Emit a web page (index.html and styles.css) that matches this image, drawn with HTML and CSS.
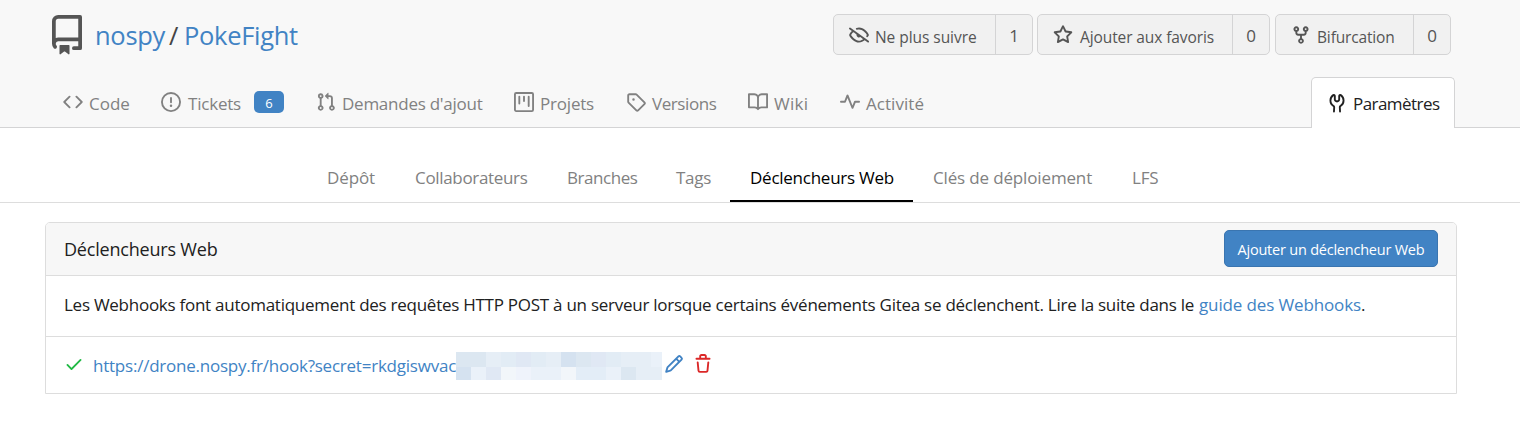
FILE: index.html
```html
<!DOCTYPE html>
<html lang="fr">
<head>
<meta charset="utf-8">
<title>nospy/PokeFight - Déclencheurs Web</title>
<link rel="stylesheet" href="styles.css">
</head>
<body>
<header class="repo-header">
  <div class="repo-top">
    <svg class="repo-icon" viewBox="0 0 16 16"><path d="M2 2.500A2.500 2.500 0 014.500 0h8.750a.75.75 0 01.75.75v12.500a.75.75 0 01-.75.75h-2.500a.75.75 0 110-1.500h1.750v-2h-8a1 1 0 00-.714 1.700.75.75 0 01-1.072 1.050A2.495 2.495 0 012 11.500v-9zm10.500-1V9h-8c-.356 0-.694.074-1 .208V2.500a1 1 0 011-1h8zM5 12.250v3.250a.25.25 0 00.4.2l1.450-1.087a.25.25 0 01.3 0L8.600 15.700a.25.25 0 00.4-.2v-3.250a.25.25 0 00-.25-.25h-3.500a.25.25 0 00-.25.25z"/></svg>
    <div class="repo-title"><a class="owner" href="#">nospy</a><span class="slash">/</span><a class="name" href="#">PokeFight</a></div>
    <div class="actions">
      <div class="action watch">
        <a class="action-main" href="#"><svg class="icon" viewBox="0 0 16 16"><path d="M.143 2.310a.75.75 0 011.047-.167l14.500 10.500a.75.75 0 11-.88 1.214l-2.248-1.628C11.346 13.190 9.792 14 8 14c-1.981 0-3.670-.992-4.933-2.078C1.797 10.832.88 9.577.43 8.900a1.618 1.618 0 010-1.797c.353-.533.995-1.420 1.868-2.305L.31 3.357A.75.75 0 01.143 2.310zm3.386 3.378a14.210 14.210 0 00-1.850 2.244.12.12 0 00-.022.068c0 .021.006.045.022.068.412.621 1.242 1.750 2.366 2.717C5.175 11.758 6.527 12.500 8 12.500c1.195 0 2.310-.488 3.290-1.191L9.063 9.695A2 2 0 016.058 7.520l-2.530-1.832zM8 3.500c-.516 0-1.017.09-1.499.251a.75.75 0 11-.473-1.423A6.230 6.230 0 018 2c1.981 0 3.670.992 4.933 2.078 1.270 1.091 2.187 2.345 2.637 3.023a1.620 1.620 0 010 1.798c-.11.166-.248.365-.41.587a.75.75 0 11-1.210-.887c.148-.201.272-.382.371-.53a.119.119 0 000-.137c-.412-.621-1.242-1.750-2.366-2.717C10.825 4.242 9.473 3.500 8 3.500z"/></svg><span>Ne plus suivre</span></a>
        <a class="count" href="#">1</a>
      </div>
      <div class="action star">
        <a class="action-main" href="#"><svg class="icon" viewBox="0 0 16 16"><path d="M8 .25a.75.75 0 01.673.418l1.882 3.815 4.210.612a.75.75 0 01.416 1.279l-3.046 2.970.719 4.192a.75.75 0 01-1.088.791L8 12.347l-3.766 1.980a.75.75 0 01-1.088-.79l.72-4.194L.818 6.374a.75.75 0 01.416-1.280l4.210-.611L7.327.668A.75.75 0 018 .25zm0 2.445L6.615 5.500a.75.75 0 01-.564.41l-3.097.45 2.240 2.184a.75.75 0 01.216.664l-.528 3.084 2.769-1.456a.75.75 0 01.698 0l2.770 1.456-.53-3.084a.75.75 0 01.216-.664l2.240-2.183-3.096-.45a.75.75 0 01-.564-.41L8 2.694z"/></svg><span>Ajouter aux favoris</span></a>
        <a class="count" href="#">0</a>
      </div>
      <div class="action fork">
        <a class="action-main" href="#"><svg class="icon" viewBox="0 0 16 16"><path d="M5 3.250a.75.75 0 11-1.500 0 .75.75 0 011.500 0zm0 2.122a2.250 2.250 0 10-1.500 0v.878A2.250 2.250 0 005.750 8.500h1.500v2.128a2.251 2.251 0 101.500 0V8.500h1.500a2.250 2.250 0 002.250-2.250v-.878a2.250 2.250 0 10-1.500 0v.878a.75.75 0 01-.75.75h-4.500A.75.75 0 015 6.250v-.878zm3.750 7.378a.75.75 0 11-1.500 0 .75.75 0 011.500 0zm3-8.750a.75.75 0 100-1.500.75.75 0 000 1.500z"/></svg><span>Bifurcation</span></a>
        <a class="count" href="#">0</a>
      </div>
    </div>
  </div>
  <nav class="repo-nav">
    <a class="tab code" href="#"><svg class="icon" viewBox="0 0 16 16"><path d="M4.720 3.220a.75.75 0 011.060 1.060L2.060 8l3.720 3.720a.75.75 0 11-1.060 1.060L.47 8.530a.75.75 0 010-1.060l4.250-4.250zm6.560 0a.75.75 0 10-1.060 1.060L13.940 8l-3.720 3.720a.75.75 0 101.060 1.060l4.250-4.250a.75.75 0 000-1.060l-4.250-4.250z"/></svg><span>Code</span></a>
    <a class="tab issues" href="#"><svg class="icon" viewBox="0 0 16 16"><path d="M8 1.500a6.500 6.500 0 100 13 6.500 6.500 0 000-13zM0 8a8 8 0 1116 0A8 8 0 010 8zm9 3a1 1 0 11-2 0 1 1 0 012 0zm-.25-6.250a.75.75 0 00-1.500 0v3.500a.75.75 0 001.500 0v-3.500z"/></svg><span>Tickets</span><b class="badge">6</b></a>
    <a class="tab pulls" href="#"><svg class="icon" viewBox="0 0 16 16"><path d="M7.177 3.073L9.573.677A.25.25 0 0110 .854v4.792a.25.25 0 01-.427.177L7.177 3.427a.25.25 0 010-.354zM3.750 2.500a.75.75 0 100 1.500.75.75 0 000-1.500zm-2.250.75a2.250 2.250 0 113 2.122v5.256a2.251 2.251 0 11-1.500 0V5.372A2.250 2.250 0 011.500 3.250zM11 2.500h-1V4h1a1 1 0 011 1v5.628a2.251 2.251 0 101.500 0V5A2.500 2.500 0 0011 2.500zm1 10.250a.75.75 0 111.500 0 .75.75 0 01-1.500 0zM3.750 12a.75.75 0 100 1.500.75.75 0 000-1.500z"/></svg><span>Demandes d'ajout</span></a>
    <a class="tab projects" href="#"><svg class="icon" viewBox="0 0 16 16"><path d="M1.750 0A1.750 1.750 0 000 1.750v12.500C0 15.216.784 16 1.750 16h12.500A1.750 1.750 0 0016 14.250V1.750A1.750 1.750 0 0014.250 0H1.750zM1.500 1.750a.25.25 0 01.25-.25h12.500a.25.25 0 01.25.25v12.500a.25.25 0 01-.25.25H1.750a.25.25 0 01-.25-.25V1.750zM11.750 3a.75.75 0 00-.75.75v7.500a.75.75 0 001.500 0v-7.500a.75.75 0 00-.75-.75zm-8.250.75a.75.75 0 011.500 0v5.500a.75.75 0 01-1.500 0v-5.500zM8 3a.75.75 0 00-.75.75v3.500a.75.75 0 001.500 0v-3.500A.75.75 0 008 3z"/></svg><span>Projets</span></a>
    <a class="tab releases" href="#"><svg class="icon" viewBox="0 0 16 16"><path d="M2.500 7.775V2.750a.25.25 0 01.25-.25h5.025a.25.25 0 01.177.073l6.250 6.250a.25.25 0 010 .354l-5.025 5.025a.25.25 0 01-.354 0l-6.250-6.250a.25.25 0 01-.073-.177zm-1.500 0V2.750C1 1.784 1.784 1 2.750 1h5.025c.464 0 .91.184 1.238.513l6.250 6.250a1.750 1.750 0 010 2.474l-5.026 5.026a1.750 1.750 0 01-2.474 0l-6.250-6.250A1.750 1.750 0 011 7.775zM6 5a1 1 0 100 2 1 1 0 000-2z"/></svg><span>Versions</span></a>
    <a class="tab wiki" href="#"><svg class="icon" viewBox="0 0 16 16"><path d="M0 1.750A.75.75 0 01.75 1h4.253c1.227 0 2.317.59 3 1.501A3.744 3.744 0 0111.006 1h4.245a.75.75 0 01.75.75v10.500a.75.75 0 01-.75.75h-4.507a2.250 2.250 0 00-1.591.659l-.622.621a.75.75 0 01-1.060 0l-.622-.621A2.250 2.250 0 005.258 13H.75a.75.75 0 01-.75-.75V1.750zm8.755 3a2.250 2.250 0 012.250-2.250H14.500v9h-3.757c-.71 0-1.400.201-1.992.572l.004-7.322zm-1.504 7.324l.004-5.073-.002-2.253A2.250 2.250 0 005.003 2.500H1.500v9h3.757a3.750 3.750 0 011.994.574z"/></svg><span>Wiki</span></a>
    <a class="tab activity" href="#"><svg class="icon" viewBox="0 0 16 16"><path d="M6 2a.75.75 0 01.696.471L10 10.731l1.304-3.260A.75.75 0 0112 7h3.250a.75.75 0 010 1.500h-2.742l-1.812 4.528a.75.75 0 01-1.392 0L6 4.770 4.696 8.030A.75.75 0 014 8.500H.75a.75.75 0 010-1.500h2.742l1.812-4.529A.75.75 0 016 2z"/></svg><span>Activité</span></a>
    <a class="tab settings" href="#"><svg class="icon" viewBox="0 0 16 16"><path d="M5.433 2.304A4.494 4.494 0 003.500 6c0 1.598.832 3.002 2.090 3.802.518.328.929.923.902 1.640v.008l-.164 3.337a.75.75 0 11-1.498-.073l.163-3.330c.002-.085-.05-.216-.207-.316A5.996 5.996 0 012 6a5.994 5.994 0 012.567-4.920 1.482 1.482 0 011.673-.04c.462.296.76.827.76 1.423v2.820c0 .082.041.16.11.206l.75.51a.25.25 0 00.28 0l.75-.51A.25.25 0 009 5.282V2.463c0-.596.298-1.127.76-1.423a1.482 1.482 0 011.673.04A5.994 5.994 0 0114 6a5.996 5.996 0 01-2.786 5.068c-.157.1-.209.23-.207.315l.163 3.330a.75.75 0 11-1.498.074l-.164-3.345c-.027-.717.384-1.312.902-1.640A4.496 4.496 0 0012.500 6a4.494 4.494 0 00-1.933-3.696c-.024.017-.067.067-.067.16v2.818a1.750 1.750 0 01-.767 1.448l-.75.51a1.750 1.750 0 01-1.966 0l-.75-.51A1.750 1.750 0 015.500 5.282V2.463c0-.092-.043-.142-.067-.159z"/></svg><span>Paramètres</span></a>
  </nav>
</header>
<nav class="sub-nav">
  <a class="depot" href="#">Dépôt</a>
  <a class="collab" href="#">Collaborateurs</a>
  <a class="branches" href="#">Branches</a>
  <a class="tags" href="#">Tags</a>
  <a class="hooks" href="#">Déclencheurs Web</a>
  <a class="keys" href="#">Clés de déploiement</a>
  <a class="lfs" href="#">LFS</a>
</nav>
<main class="card">
  <div class="card-header"><h4>Déclencheurs Web</h4><a class="add" href="#">Ajouter un déclencheur Web</a></div>
  <p class="intro"><span class="sentence">Les Webhooks font automatiquement des requêtes HTTP POST à un serveur lorsque certains événements Gitea se déclenchent. Lire la suite dans le</span><a class="guide" href="#">guide des Webhooks</a>.</p>
  <div class="hook">
    <svg class="icon check" viewBox="0 0 16 16"><path d="M13.780 4.220a.75.75 0 010 1.060l-7.250 7.250a.75.75 0 01-1.060 0L2.220 9.280a.75.75 0 011.060-1.060L6 10.940l6.720-6.720a.75.75 0 011.060 0z"/></svg>
    <a class="url" href="#">https://drone.nospy.fr/hook?secret=rkdgiswvac</a>
    <svg class="mosaic" viewBox="0 0 206 28" shape-rendering="crispEdges">
      <path fill="#e6eef6" d="M0 0h206v28H0z"/>
      <path fill="#dce7f1" d="M0 0h30v15H0zM120 0h15v15h-15zM165 15h15v13h-15z"/>
      <path fill="#e2ecf5" d="M45 0h15v15H45zM75 0h15v15H75zM150 0h15v15h-15z"/>
      <path fill="#e0e8f4" d="M60 0h15v15H60zM30 15h15v13H30zM135 0h15v15h-15z"/>
      <path fill="#d5e2f0" d="M105 0h15v15h-15zM0 15h15v13H0z"/>
      <path fill="#eaf1f9" d="M15 15h15v13H15zM75 15h30v13H75zM150 15h15v13h-15zM195 0h11v15h-11z"/>
      <path fill="#f2f6fa" d="M45 15h15v13H45zM105 15h15v13h-15z"/>
      <path fill="#eff3fb" d="M60 15h15v13H60z"/>
      <path fill="#e3edf7" d="M120 15h30v13h-30z"/>
    </svg>
    <svg class="icon pencil" viewBox="0 0 16 16"><path d="M11.013 1.427a1.750 1.750 0 012.474 0l1.086 1.086a1.750 1.750 0 010 2.474l-8.610 8.610c-.21.21-.47.364-.756.445l-3.251.93a.75.75 0 01-.927-.928l.929-3.250a1.750 1.750 0 01.445-.758l8.610-8.610zm1.414 1.060a.25.25 0 00-.354 0L10.811 3.750l1.439 1.440 1.263-1.263a.25.25 0 000-.354l-1.086-1.086zM11.189 6.250L9.750 4.810l-6.286 6.287a.25.25 0 00-.064.108l-.558 1.953 1.953-.558a.249.249 0 00.108-.064l6.286-6.286z"/></svg>
    <svg class="icon trash" viewBox="0 0 16 16"><path d="M6.500 1.750a.25.25 0 01.25-.25h2.500a.25.25 0 01.25.25V3h-3V1.750zm4.500 0V3h2.250a.75.75 0 010 1.500H2.750a.75.75 0 010-1.500H5V1.750C5 .784 5.784 0 6.750 0h2.500C10.216 0 11 .784 11 1.750zM4.496 6.675a.75.75 0 10-1.492.15l.66 6.600A1.750 1.750 0 005.405 15h5.190c.9 0 1.652-.681 1.741-1.576l.66-6.600a.75.75 0 00-1.492-.149l-.66 6.600a.25.25 0 01-.249.225h-5.190a.25.25 0 01-.249-.225l-.66-6.600z"/></svg>
  </div>
</main>
</body>
</html>
```
FILE: styles.css
```css
* { box-sizing: border-box; }
body {
  margin: 0;
  background: #fff;
  color: #212121;
  font: 17px/24px "Open Sans", sans-serif;
  white-space: nowrap;
}
a { color: #4183c4; text-decoration: none; }
svg { display: block; fill: currentColor; fill-rule: evenodd; flex: none; }
.icon { width: 20px; height: 20px; }

/* Repository header */
.repo-header {
  height: 128px;
  background: #f8f8f8;
  border-bottom: 1px solid #d4d4d5;
}
.repo-top { display: flex; height: 77px; padding: 14px 69px 0 47px; }
.repo-icon { width: 40px; height: 40px; margin-top: 1px; color: #555; }
.repo-title { display: flex; padding: 3px 0 0 8px; font-size: 25.5px; line-height: 36px; }
.owner { width: 74px; letter-spacing: -0.3px; }
.slash { width: 15px; color: #444; }
.name { letter-spacing: -0.3px; }
.actions { display: flex; gap: 4px; margin-left: auto; }
.action {
  display: flex;
  height: 41px;
  border: 1px solid #d4d4d5;
  border-radius: 5px;
  background: #f1f1f1;
  color: #555;
}
.action a { color: #555; }
.action-main { display: flex; flex: 1; padding: 10px 0 0 15px; font-size: 15.5px; }
.action-main span { margin-left: 6px; }
.count { width: 37px; padding-top: 9px; border-left: 1px solid #d4d4d5; text-align: center; }
.watch { width: 200px; }
.watch span { letter-spacing: -0.05px; }
.star { width: 233px; }
.star span { margin-left: 7px; letter-spacing: -0.1px; }
.fork { width: 176px; margin-left: 1px; }
.fork span { letter-spacing: -0.15px; }

.repo-nav { display: flex; height: 51px; padding: 0 65px 0 63px; }
.tab { display: flex; padding-top: 15px; color: #818181; }
.tab span { padding-left: 6px; }
.code { width: 98px; }
.issues { width: 155px; }
.pulls { width: 198px; }
.projects { width: 112px; }
.releases { width: 122px; }
.wiki { width: 92px; }
.issues span { letter-spacing: -0.21px; width: 73px; padding-left: 7px; }
.pulls span { letter-spacing: -0.25px; }
.projects span { letter-spacing: -0.2px; }
.releases span { letter-spacing: -0.42px; }
.wiki span { letter-spacing: 0.3px; }
.activity span { letter-spacing: 0.05px; }
.badge {
  width: 30px;
  height: 22px;
  margin-top: -1px;
  border-radius: 5px;
  background: #4183c4;
  color: #fff;
  font-size: 13px;
  font-weight: 400;
  line-height: 24px;
  text-align: center;
}
.settings {
  width: 144px;
  margin-left: auto;
  padding-left: 15px;
  border: 1px solid #d4d4d5;
  border-bottom: 0;
  border-radius: 5px 5px 0 0;
  background: #fff;
  color: #212121;
}
.settings span { margin-top: -1px; letter-spacing: -0.55px; }

/* Settings sections */
.sub-nav {
  display: flex;
  justify-content: center;
  height: 75px;
  padding: 27px 35px 0 0;
  border-bottom: 1px solid #ddd;
}
.sub-nav a { height: 47px; padding: 11px 0 0 20px; color: #818181; }
.depot { width: 88px; letter-spacing: -0.1px; }
.collab { width: 152px; letter-spacing: -0.33px; }
.branches { width: 109px; letter-spacing: -0.45px; }
.tags { width: 74px; letter-spacing: -0.25px; }
.sub-nav .hooks { width: 183px; border-bottom: 2px solid #000; color: #000; letter-spacing: -0.25px; }
.keys { width: 199px; letter-spacing: -0.15px; }
.lfs { width: 66px; letter-spacing: -0.2px; }

/* Webhook list */
.card { margin: 19px 63px 0 45px; border: 1px solid #ddd; border-radius: 5px 5px 0 0; }
.card-header {
  display: flex;
  align-items: flex-start;
  justify-content: space-between;
  height: 53px;
  padding: 7px 18px 0;
  background: #f7f7f7;
  border-bottom: 1px solid #ddd;
  border-radius: 4px 4px 0 0;
}
h4 { margin: 7px 0 0; font-size: 18px; font-weight: 400; letter-spacing: -0.2px; }
.add {
  width: 214px;
  height: 37px;
  border: 1px solid #3a75b0;
  border-radius: 5px;
  background: #4183c4;
  color: #fff;
  font-size: 14.5px;
  line-height: 37px;
  letter-spacing: -0.22px;
  text-align: center;
}
.intro { display: flex; height: 61px; margin: 0; padding: 17px 18px; border-bottom: 1px solid #ddd; }
.sentence { width: 1135px; letter-spacing: -0.26px; }
.guide { letter-spacing: -0.13px; }
.hook { display: flex; height: 56px; padding: 17px 18px; }
.check { color: #21ba45; }
.url { width: 363px; margin-left: 9px; letter-spacing: -0.23px; }
.mosaic { width: 206px; height: 28px; margin-top: -2px; }
.pencil { margin-left: 2px; color: #4183c4; }
.trash { margin-left: 9px; color: #db2828; }
```
